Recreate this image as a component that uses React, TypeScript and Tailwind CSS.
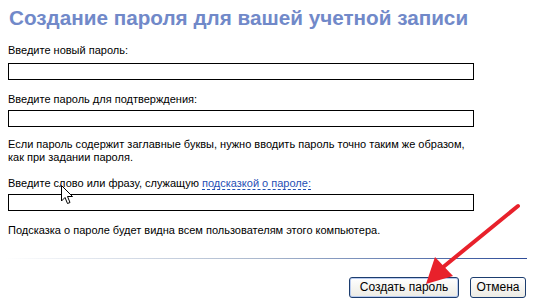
import React from "react";

export default function App() {
  return (
    <div
      className="relative w-[534px] h-[302px] bg-white overflow-hidden text-black"
      style={{ fontFamily: '"Liberation Sans", Arial, sans-serif' }}
    >
      <div className="flex flex-col pl-[8px] pr-[8px]">
        <h1 className="mt-[5px] ml-[1px] h-[26px] leading-[26px] text-[20.7px] font-bold text-[#7189c9] whitespace-nowrap">
          Создание пароля для вашей учетной записи
        </h1>
        <div className="mt-[12px] h-[14px] leading-[14px] text-[11px]">Введите новый пароль:</div>
        <div className="mt-[6px] w-[466px] h-[17px] border border-black bg-white" />
        <div className="mt-[12px] h-[14px] leading-[14px] text-[11px]">Введите пароль для подтверждения:</div>
        <div className="mt-[4px] w-[466px] h-[17px] border border-black bg-white" />
        <div className="mt-[11px] text-[11px] leading-[13px] whitespace-nowrap">
          Если пароль содержит заглавные буквы, нужно вводить пароль точно таким же образом,
          <br />
          как при задании пароля.
        </div>
        <div className="mt-[12px] h-[14px] leading-[14px] text-[11px] whitespace-nowrap">
          Введите слово или фразу, служащую{" "}
          <span className="text-[#1f4fb5] border-b border-dashed border-[#1f4fb5]">подсказкой о пароле:</span>
        </div>
        <div className="mt-[4px] w-[466px] h-[17px] border border-black bg-white" />
        <div className="mt-[12px] h-[14px] leading-[14px] text-[11px]">
          Подсказка о пароле будет видна всем пользователям этого компьютера.
        </div>
        <div className="mt-[21px] ml-[-3px] w-[522px] h-[1px] bg-gradient-to-r from-white via-[#a8b6cc] to-[#2e4b98]" />
        <div className="mt-[18px] flex justify-end gap-[11px]">
          <button className="w-[110px] h-[21px] rounded-[3px] border border-[#1c3d6e] bg-gradient-to-b from-white to-[#ecebe4] text-[12px] leading-[19px] shadow-[inset_0_0_0_1px_#b9cbef]">
            Создать пароль
          </button>
          <button className="w-[56px] h-[21px] rounded-[3px] border border-[#1c3d6e] bg-gradient-to-b from-white to-[#ecebe4] text-[12px] leading-[19px]">
            Отмена
          </button>
        </div>
      </div>

      {/* mouse cursor */}
      <svg className="absolute left-[61px] top-[185px]" width="13" height="20" viewBox="0 0 13 20">
        <path d="M0.5 0.5 L0.5 16 L4 12.5 L6.5 18.5 L9 17.5 L6.5 11.5 L11.5 11.5 Z" fill="white" stroke="black" strokeWidth="1" strokeLinejoin="miter" />
      </svg>

      {/* red arrow */}
      <svg className="absolute left-0 top-0" width="534" height="302" viewBox="0 0 534 302">
        <line x1="518" y1="206" x2="442" y2="268" stroke="#e8212b" strokeWidth="4" strokeLinecap="round" />
        <polygon points="426,284 435,257 453,276" fill="#e8212b" />
      </svg>
    </div>
  );
}
